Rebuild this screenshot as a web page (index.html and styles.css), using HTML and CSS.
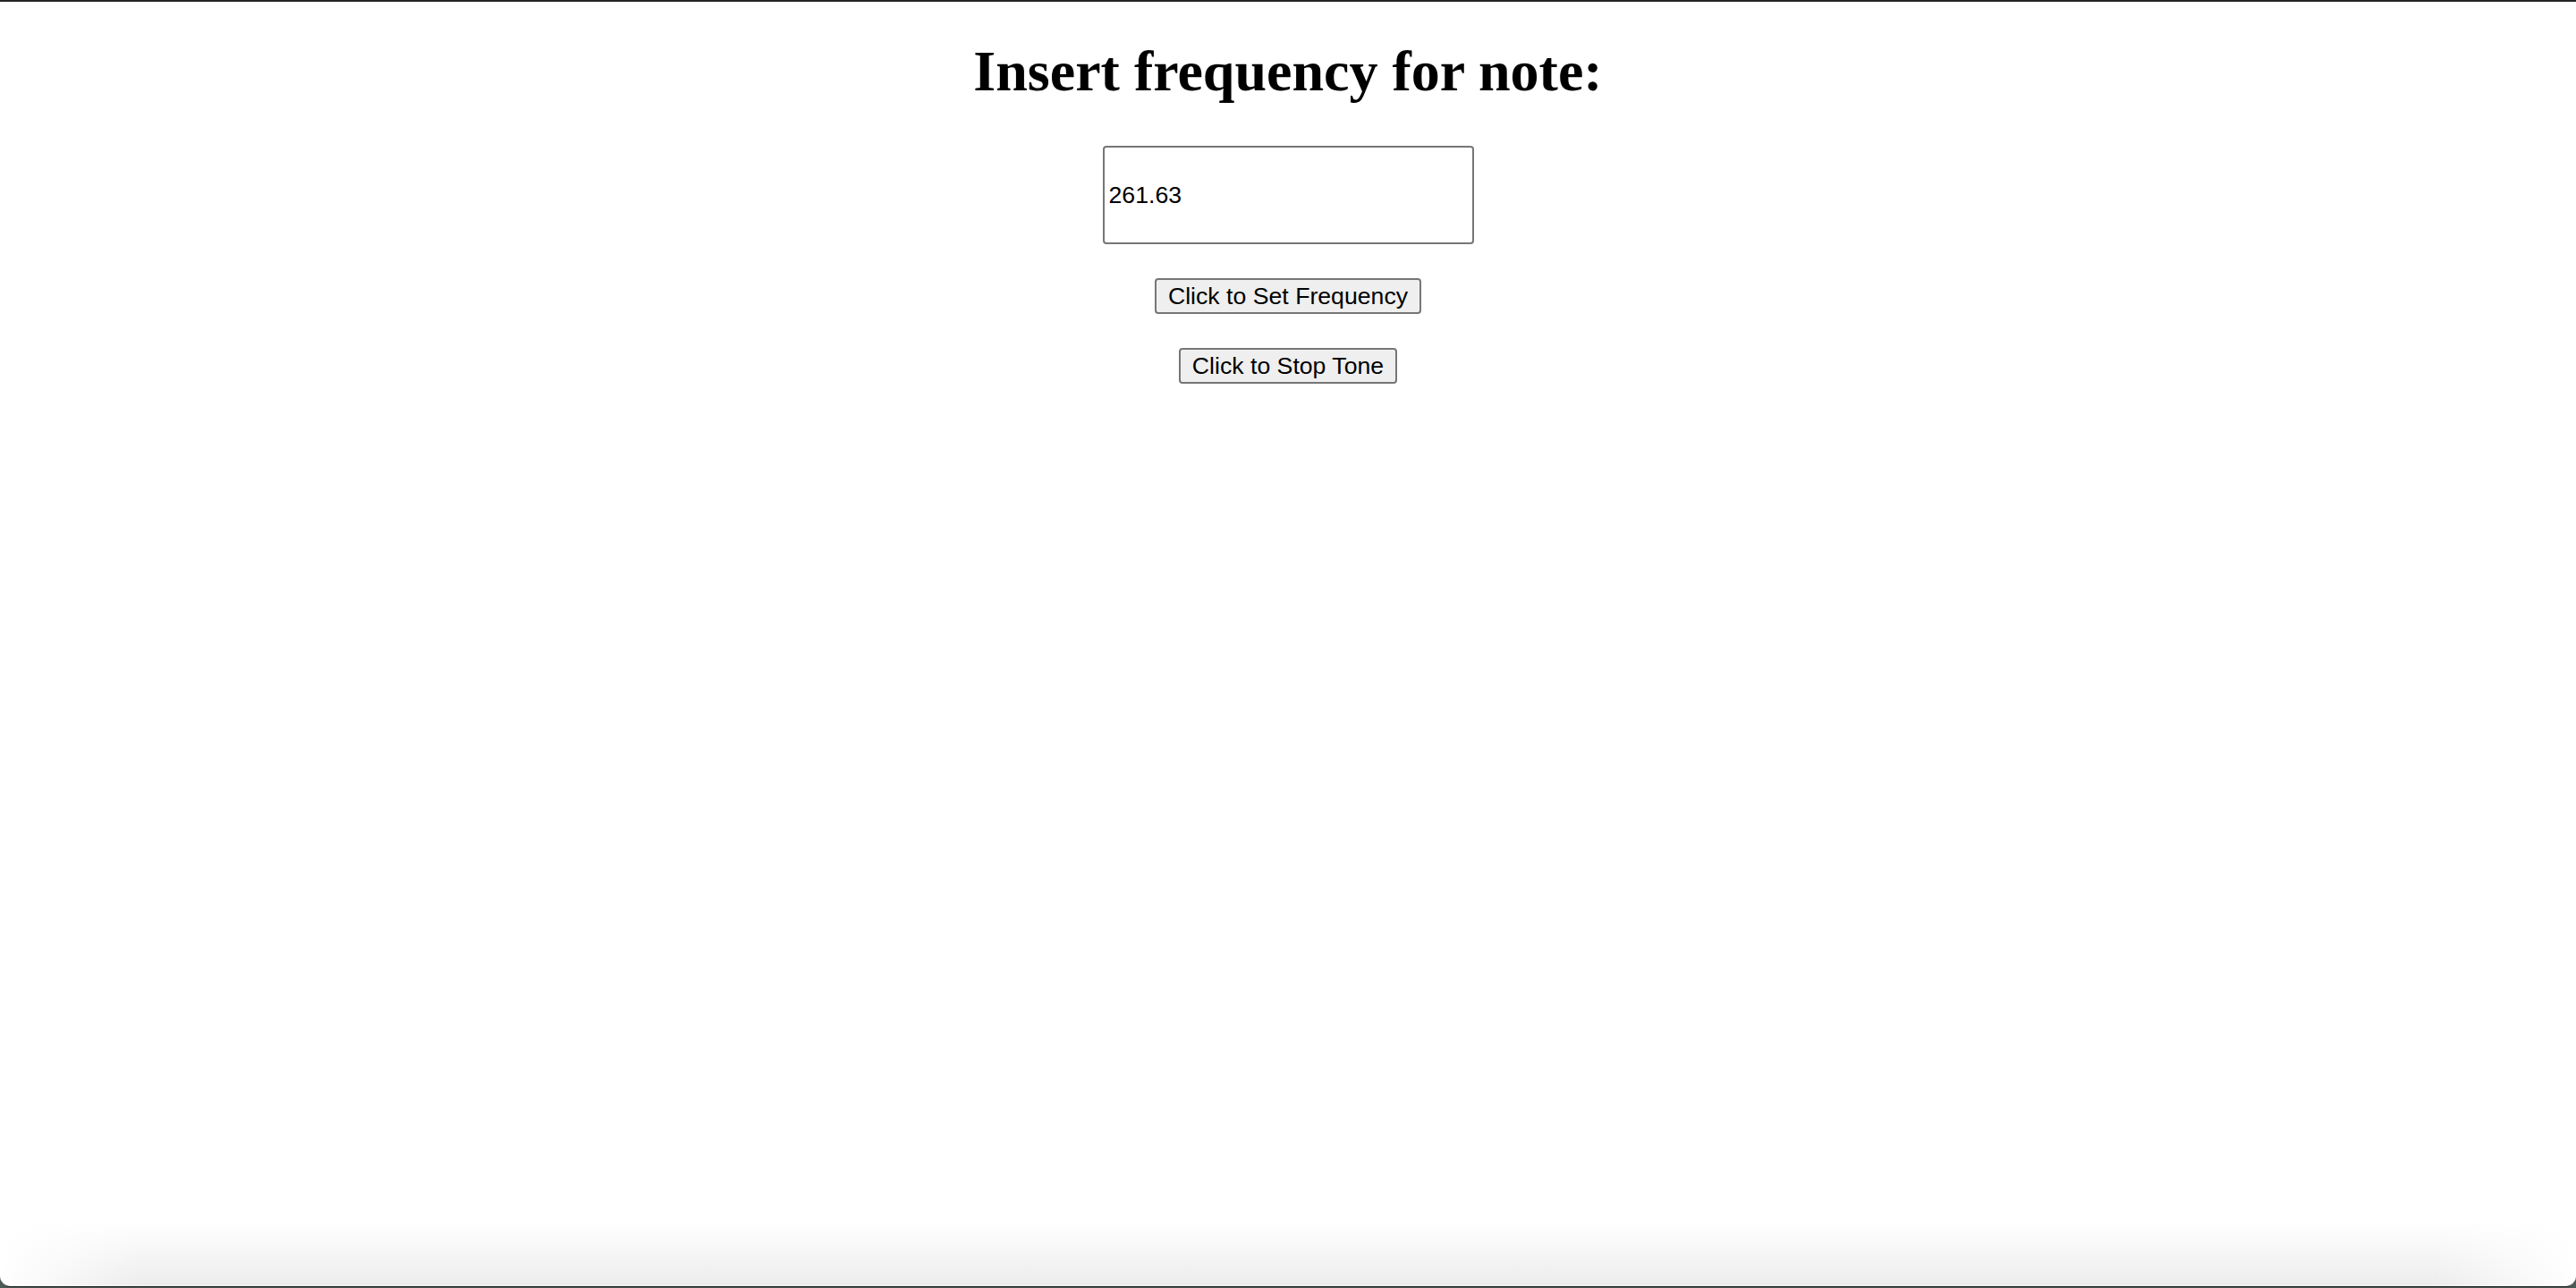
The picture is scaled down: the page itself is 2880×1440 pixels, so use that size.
FILE: index.html
```html
<!DOCTYPE html>
<html lang="en">
<head>
<meta charset="utf-8">
<title>Tone</title>
<link rel="stylesheet" href="styles.css">
</head>
<body>
<div class="window">
  <h1 class="title">Insert frequency for note:</h1>
  <div class="controls">
    <input class="freq" type="text" value="261.63">
    <button class="btn" type="button">Click to Set Frequency</button>
    <button class="btn" type="button">Click to Stop Tone</button>
  </div>
</div>
</body>
</html>
```
FILE: styles.css
```css
html, body {
  margin: 0;
  padding: 0;
}
body {
  background: #4c5a56;
  height: 1440px;
  overflow: hidden;
}
.window {
  box-sizing: border-box;
  height: 1439px;
  border-top: 2px solid #242424;
  border-bottom: 1px solid #1c1c1c;
  border-radius: 0 0 12px 12px;
  background:
    linear-gradient(to right, #ffffff 0, rgba(255,255,255,0) 160px, rgba(255,255,255,0) calc(100% - 160px), #ffffff 100%),
    linear-gradient(to bottom, #ffffff calc(100% - 72px), #ececec 100%);
  padding-top: 41px;
  display: flex;
  flex-direction: column;
  align-items: center;
}
.title {
  margin: 0 0 46px 0;
  font-family: "Liberation Serif", "Times New Roman", serif;
  font-weight: bold;
  font-size: 64px;
  line-height: 74px;
  color: #000;
  text-align: center;
}
.controls {
  display: flex;
  flex-direction: column;
  align-items: center;
  gap: 38px;
}
.freq {
  box-sizing: border-box;
  width: 415px;
  height: 110px;
  margin: 0;
  padding: 0 5px;
  border: 2px solid #767676;
  border-radius: 4px;
  background: #fff;
  font-family: "Liberation Sans", Arial, sans-serif;
  font-size: 26.67px;
  color: #000;
  outline: none;
}
.btn {
  box-sizing: border-box;
  height: 40px;
  margin: 0;
  padding: 0 12.5px;
  border: 2px solid #767676;
  border-radius: 4px;
  background: #efefef;
  font-family: "Liberation Sans", Arial, sans-serif;
  font-size: 26.67px;
  line-height: 30px;
  color: #000;
}
```
